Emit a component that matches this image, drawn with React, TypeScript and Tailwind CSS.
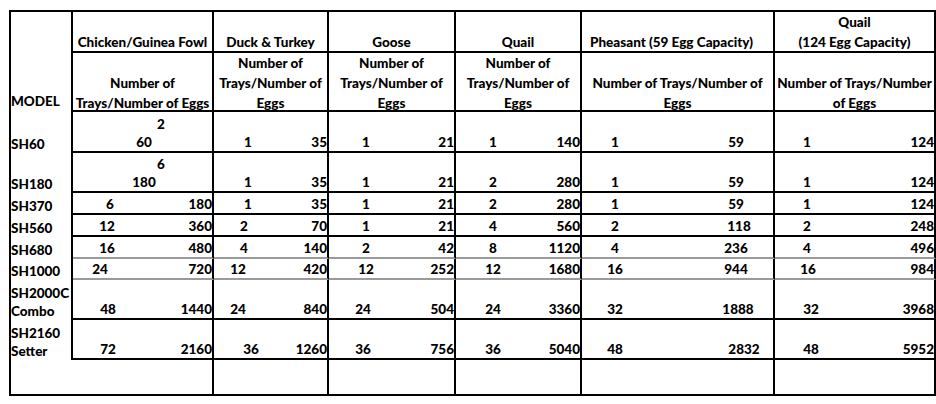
import React from "react";

type Cell = { t: string; tm: string; e: string; em?: string; l1?: string; l2?: string };
type Row = { model: string[]; cells: Cell[]; gray?: boolean };

const rows: Row[] = [
  {
    model: ["SH60"],
    cells: [
      { t: "", tm: "", e: "", l1: "2", l2: "60" },
      { t: "1", tm: "ml-[14px]", e: "35" },
      { t: "1", tm: "ml-[17px]", e: "21" },
      { t: "1", tm: "ml-[17px]", e: "140" },
      { t: "1", tm: "ml-[13px]", e: "59", em: "ml-[81px]" },
      { t: "1", tm: "ml-[12px]", e: "124" },
    ],
  },
  {
    model: ["SH180"],
    cells: [
      { t: "", tm: "", e: "", l1: "6", l2: "180" },
      { t: "1", tm: "ml-[14px]", e: "35" },
      { t: "1", tm: "ml-[17px]", e: "21" },
      { t: "2", tm: "ml-[17px]", e: "280" },
      { t: "1", tm: "ml-[13px]", e: "59", em: "ml-[81px]" },
      { t: "1", tm: "ml-[12px]", e: "124" },
    ],
  },
  {
    model: ["SH370"],
    cells: [
      { t: "6", tm: "ml-[17px]", e: "180" },
      { t: "1", tm: "ml-[14px]", e: "35" },
      { t: "1", tm: "ml-[17px]", e: "21" },
      { t: "2", tm: "ml-[17px]", e: "280" },
      { t: "1", tm: "ml-[13px]", e: "59", em: "ml-[81px]" },
      { t: "1", tm: "ml-[12px]", e: "124" },
    ],
  },
  {
    model: ["SH560"],
    cells: [
      { t: "12", tm: "ml-[14px]", e: "360" },
      { t: "2", tm: "ml-[10px]", e: "70" },
      { t: "1", tm: "ml-[17px]", e: "21" },
      { t: "4", tm: "ml-[17px]", e: "560" },
      { t: "2", tm: "ml-[13px]", e: "118", em: "ml-[84px]" },
      { t: "2", tm: "ml-[12px]", e: "248" },
    ],
  },
  {
    model: ["SH680"],
    gray: true,
    cells: [
      { t: "16", tm: "ml-[14px]", e: "480" },
      { t: "4", tm: "ml-[10px]", e: "140" },
      { t: "2", tm: "ml-[17px]", e: "42" },
      { t: "8", tm: "ml-[17px]", e: "1120" },
      { t: "4", tm: "ml-[13px]", e: "236", em: "ml-[81px]" },
      { t: "4", tm: "ml-[12px]", e: "496" },
    ],
  },
  {
    model: ["SH1000"],
    gray: true,
    cells: [
      { t: "24", tm: "ml-[7px]", e: "720" },
      { t: "12", tm: "ml-[4px]", e: "420" },
      { t: "12", tm: "ml-[17px]", e: "252" },
      { t: "12", tm: "ml-[17px]", e: "1680" },
      { t: "16", tm: "ml-[13px]", e: "944", em: "ml-[81px]" },
      { t: "16", tm: "ml-[13px]", e: "984" },
    ],
  },
  {
    model: ["SH2000C", "Combo"],
    cells: [
      { t: "48", tm: "ml-[15px]", e: "1440" },
      { t: "24", tm: "ml-[4px]", e: "840" },
      { t: "24", tm: "ml-[14px]", e: "504" },
      { t: "24", tm: "ml-[17px]", e: "3360" },
      { t: "32", tm: "ml-[13px]", e: "1888", em: "ml-[83px]" },
      { t: "32", tm: "ml-[16px]", e: "3968" },
    ],
  },
  {
    model: ["SH2160", "Setter"],
    cells: [
      { t: "72", tm: "ml-[15px]", e: "2160" },
      { t: "36", tm: "ml-[17px]", e: "1260" },
      { t: "36", tm: "ml-[14px]", e: "756" },
      { t: "36", tm: "ml-[17px]", e: "5040" },
      { t: "48", tm: "ml-[13px]", e: "2832", em: "ml-[89px]" },
      { t: "48", tm: "ml-[16px]", e: "5952" },
    ],
  },
];

function HeadCell({ lines, extra = "", mb = "-mb-[3px]" }: { lines: string[]; extra?: string; mb?: string }) {
  return (
    <div className="border-r-2 border-b-2 border-black flex items-end justify-center text-center leading-[20px]">
      <div className={`${mb} whitespace-nowrap ${extra}`}>
        {lines.map((l, i) => (
          <div key={i}>{l}</div>
        ))}
      </div>
    </div>
  );
}

function DataCell({ c, gray }: { c: Cell; gray?: boolean }) {
  const b = gray
    ? "border-r-2 border-b-2 border-r-black border-b-[#9a9a9a]"
    : "border-r-2 border-b-2 border-black";
  if (c.l1 !== undefined) {
    return (
      <div className={`${b} flex flex-col justify-end leading-[18px]`}>
        <div className="pl-[37px] text-center">{c.l1}</div>
        <div className="pl-[3px] text-center">{c.l2}</div>
      </div>
    );
  }
  return (
    <div className={`${b} flex items-end leading-[18px] whitespace-nowrap`}>
      <span className={`${c.tm} w-[40px] shrink-0 text-center`}>{c.t}</span>
      {c.em ? (
        <span className={`${c.em} w-[40px] shrink-0 text-center`}>{c.e}</span>
      ) : (
        <span className="ml-auto text-right">{c.e}</span>
      )}
    </div>
  );
}

export default function App() {
  return (
    <div className="min-h-screen w-[936px] overflow-hidden bg-white pt-[10px] pl-[9px]">
      <div className="w-[927px] border-t-2 border-l-2 border-b-2 border-black grid grid-cols-[62px_141px_115px_127px_126px_193px_161px] grid-rows-[41px_59px_41px_40px_22px_22px_22px_21px_40px_40px_34px] font-['Lato','Liberation_Sans',sans-serif] font-black text-[13.5px] text-black">
        <div className="row-span-2 border-r-2 border-black flex items-end leading-[20px] pb-[1px]">
          MODEL
        </div>
        <HeadCell lines={["Chicken/Guinea Fowl"]} mb="-mb-[1px]" />
        <HeadCell lines={["Duck & Turkey"]} mb="-mb-[1px]" />
        <HeadCell lines={["Goose"]} mb="-mb-[1px]" />
        <HeadCell lines={["Quail"]} mb="-mb-[1px]" />
        <HeadCell lines={["Pheasant (59 Egg Capacity)"]} extra="pr-[12px]" mb="-mb-[1px]" />
        <HeadCell lines={["Quail", "(124 Egg Capacity)"]} mb="-mb-[1px]" />

        <HeadCell lines={["Number of", "Trays/Number of Eggs"]} />
        <HeadCell lines={["Number of", "Trays/Number of", "Eggs"]} />
        <HeadCell lines={["Number of", "Trays/Number of", "Eggs"]} />
        <HeadCell lines={["Number of", "Trays/Number of", "Eggs"]} />
        <HeadCell lines={["Number of Trays/Number of", "Eggs"]} />
        <HeadCell lines={["Number of Trays/Number", "of Eggs"]} />

        {rows.map((r, i) => (
          <React.Fragment key={i}>
            <div className="border-r-2 border-black flex flex-col justify-end leading-[18px] whitespace-nowrap">
              {r.model.map((m, j) => (
                <div key={j}>{m}</div>
              ))}
            </div>
            {r.cells.map((c, j) => (
              <DataCell key={j} c={c} gray={r.gray} />
            ))}
          </React.Fragment>
        ))}

        <div />
        <div className="border-r-2 border-black" />
        <div className="border-r-2 border-black" />
        <div className="border-r-2 border-black" />
        <div className="border-r-2 border-black" />
        <div className="border-r-2 border-black" />
        <div className="border-r-2 border-black" />
      </div>
    </div>
  );
}
